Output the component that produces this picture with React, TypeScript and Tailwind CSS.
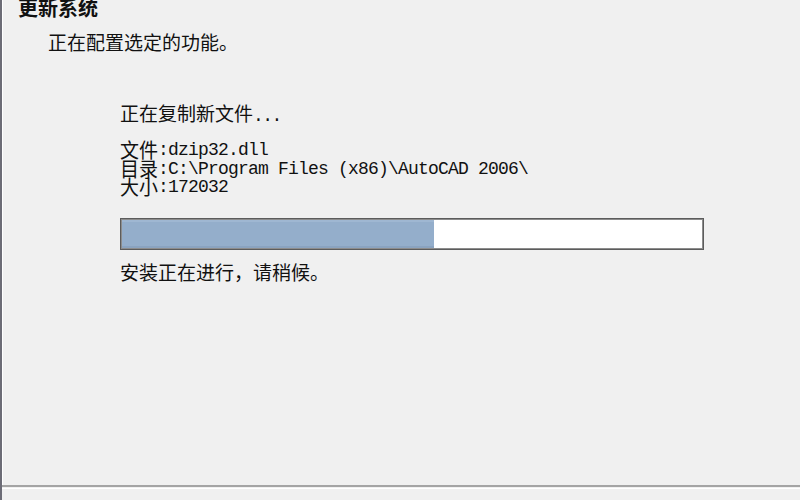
import { useMemo } from "react";

type FileInfo = {
  label: string;
  value: string;
};

const cjk = "font-['Noto_Sans_CJK_SC','Noto_Sans_CJK_JP',sans-serif]";
const mono = "font-['Liberation_Mono','DejaVu_Sans_Mono',monospace]";

const FileRow = ({ label, value }: FileInfo) => (
  <div className="flex items-center h-[18.5px] leading-[18.5px]">
    <span className={`${cjk} text-[19px] w-[38px] inline-block scale-y-105`}>
      {label}
    </span>
    <span className={`${mono} text-[18px] tracking-[-0.8px] w-[10px]`}>:</span>
    <span className={`${mono} text-[18px] tracking-[-0.8px] whitespace-pre`}>
      {value}
    </span>
  </div>
);

const ProgressBar = ({ percent }: { percent: number }) => (
  <div className="w-[584px] h-[32px] border border-[#5c5c5c] bg-white shadow-[inset_0_0_0_1px_#8c8c8c]">
    <div className="h-full p-px">
      <div
        className="h-full bg-[#94aecb] shadow-[inset_0_-2px_0_#8aa3c0,inset_0_2px_0_#9fb7d2]"
        style={{ width: `${percent}%` }}
      />
    </div>
  </div>
);

export default function App() {
  const rows = useMemo<FileInfo[]>(
    () => [
      { label: "文件", value: "dzip32.dll" },
      { label: "目录", value: "C:\\Program Files (x86)\\AutoCAD 2006\\" },
      { label: "大小", value: "172032" },
    ],
    []
  );

  return (
    <div
      className={`${cjk} w-[800px] h-[500px] overflow-hidden bg-[#f0f0f0] text-[#111] border-l-2 border-[#6c6c76] flex flex-col`}
    >
      <div className="flex-1 flex flex-col shadow-[inset_1px_0_0_#ffffff]">
        <div className="pl-[16px] mt-[-2px] text-[20px] leading-[20px] font-bold">
          更新系统
        </div>
        <div className="pl-[46px] mt-[14px] text-[19px] leading-[19px]">
          正在配置选定的功能。
        </div>

        <div className="pl-[118px] flex flex-col">
          <div className="mt-[52px] h-[19px] text-[19px] leading-[19px] flex items-baseline">
            <span>正在复制新文件</span>
            <span className={`${mono} text-[18px] leading-[19px] tracking-[-1.5px]`}>...</span>
          </div>

          <div className="mt-[19px] flex flex-col">
            {rows.map((r) => (
              <FileRow key={r.label} {...r} />
            ))}
          </div>

          <div className="mt-[21.5px]">
            <ProgressBar percent={53.8} />
          </div>

          <div className="mt-[11.5px] text-[19px] leading-[19px]">
            安装正在进行，请稍候。
          </div>
        </div>
      </div>

      <div className="h-[15px] border-t-2 border-[#a4a4a4]">
        <div className="mt-px h-px bg-white" />
      </div>
    </div>
  );
}
